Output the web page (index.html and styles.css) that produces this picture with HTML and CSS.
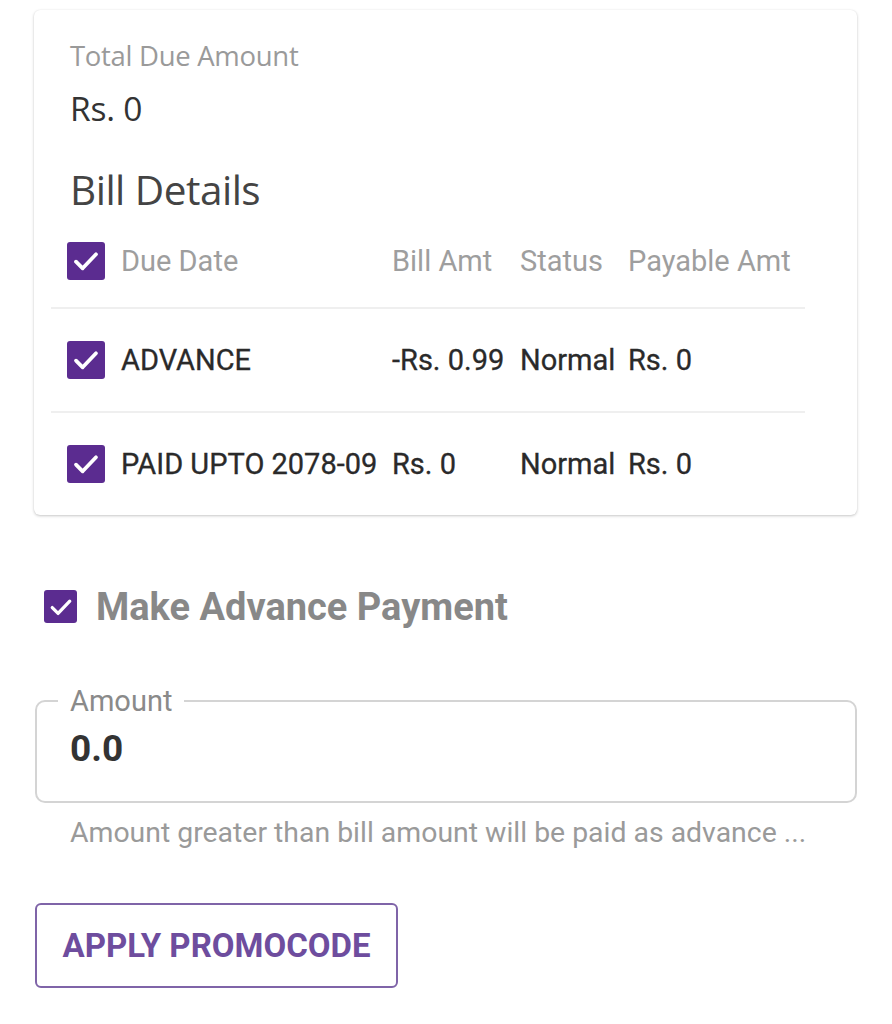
FILE: index.html
```html
<!DOCTYPE html>
<html>
<head>
<meta charset="utf-8">
<link rel="stylesheet" href="styles.css">
</head>
<body>
<div class="page">
  <div class="card">
    <div class="summary">
      <div class="due-label">Total Due Amount</div>
      <div class="due-value">Rs. 0</div>
      <div class="bill-title">Bill Details</div>
    </div>
    <div class="bill-table">
      <div class="row head">
        <div class="cell cb"><span class="check"><svg viewBox="0 0 24 24"><polyline points="4.5,12.5 9.5,17.5 19.5,7"/></svg></span></div>
        <div class="cell">Due Date</div>
        <div class="cell">Bill Amt</div>
        <div class="cell">Status</div>
        <div class="cell">Payable Amt</div>
      </div>
      <div class="row">
        <div class="cell cb"><span class="check"><svg viewBox="0 0 24 24"><polyline points="4.5,12.5 9.5,17.5 19.5,7"/></svg></span></div>
        <div class="cell">ADVANCE</div>
        <div class="cell">-Rs. 0.99</div>
        <div class="cell">Normal</div>
        <div class="cell">Rs. 0</div>
      </div>
      <div class="row">
        <div class="cell cb"><span class="check"><svg viewBox="0 0 24 24"><polyline points="4.5,12.5 9.5,17.5 19.5,7"/></svg></span></div>
        <div class="cell">PAID UPTO 2078-09</div>
        <div class="cell">Rs. 0</div>
        <div class="cell">Normal</div>
        <div class="cell">Rs. 0</div>
      </div>
    </div>
  </div>

  <label class="advance">
    <span class="check small"><svg viewBox="0 0 24 24"><polyline points="4.5,12.5 9.5,17.5 19.5,7"/></svg></span>
    <span class="advance-text">Make Advance Payment</span>
  </label>

  <fieldset class="field">
    <legend>Amount</legend>
    <div class="field-value">0.0</div>
  </fieldset>
  <div class="helper">Amount greater than bill amount will be paid as advance ...</div>

  <button class="promo">APPLY PROMOCODE</button>
</div>
</body>
</html>
```

FILE: styles.css
```css
* { box-sizing: border-box; }
html, body { margin: 0; padding: 0; background: #fff; }
body { font-family: Roboto, "Liberation Sans", sans-serif; color: #333; }

.page { padding: 0 35px 0 34px; }

.card {
  margin-top: 10px;
  background: #fff;
  border-radius: 6px;
  box-shadow: 0 1px 3px rgba(0,0,0,0.22), 0 0 1px rgba(0,0,0,0.08);
  padding: 28px 52px 0 17px;
}

.summary { padding-left: 19px; font-family: "Open Sans", sans-serif; }
.due-label { font-size: 27.5px; color: #9a9a9a; line-height: 36px; letter-spacing: -0.3px; }
.due-value { font-size: 33.5px; color: #333; font-weight: 500; line-height: 40px; margin-top: 14px; letter-spacing: -0.2px; }
.bill-title { font-size: 40.5px; color: #444; font-weight: 500; line-height: 50px; margin-top: 37px; letter-spacing: -0.5px; }

.row {
  display: grid;
  grid-template-columns: 62px 271px 128px 108px 185px;
  height: 104px;
  align-items: center;
  border-top: 2px solid #efefef;
  font-size: 29px;
  font-weight: 400;
  color: #2a2a2a;
  -webkit-text-stroke: 0.3px #2a2a2a;
}
.row.head { border-top: none; height: 92px; color: #9e9e9e; -webkit-text-stroke: 0; }
.cell { padding: 0 8px; white-space: nowrap; }
.cell.cb { padding: 0 0 0 16px; display: flex; }

.check {
  width: 38px; height: 38px;
  background: #5b2c90;
  border-radius: 3px;
  display: inline-flex; align-items: center; justify-content: center;
}
.check svg { width: 32px; height: 32px; fill: none; stroke: #fff; stroke-width: 2.8; stroke-linecap: round; stroke-linejoin: round; }
.check.small { width: 33px; height: 33px; }
.check.small svg { width: 28px; height: 28px; }

.advance {
  display: flex; align-items: center; gap: 19px;
  margin-top: 69px; padding-left: 10px; height: 45px;
}
.advance-text { font-size: 38px; font-weight: 700; color: #888; }

.field {
  margin: 55px 0 0 1px;
  border: 2px solid #d4d4d4;
  border-radius: 10px;
  padding: 9px 33px 30px;
  min-width: 0;
}
.field legend {
  font-size: 29px; color: #8a8a8a;
  padding: 0 12px; margin-left: -12px;
  line-height: 34px;
}
.field-value { font-size: 37px; font-weight: 700; color: #333; line-height: 44px; }

.helper { font-size: 28.4px; color: #9a9a9a; margin: 12px 0 0 36px; line-height: 36px; white-space: nowrap; }

.promo {
  display: block;
  margin: 52px 0 0 1px;
  width: 363px; height: 85px;
  border: 2px solid #7f64a8;
  border-radius: 6px;
  background: #fff;
  font-family: Roboto, sans-serif;
  font-size: 33px; font-weight: 700;
  color: #6e4d9e;
  padding: 0;
}
```
